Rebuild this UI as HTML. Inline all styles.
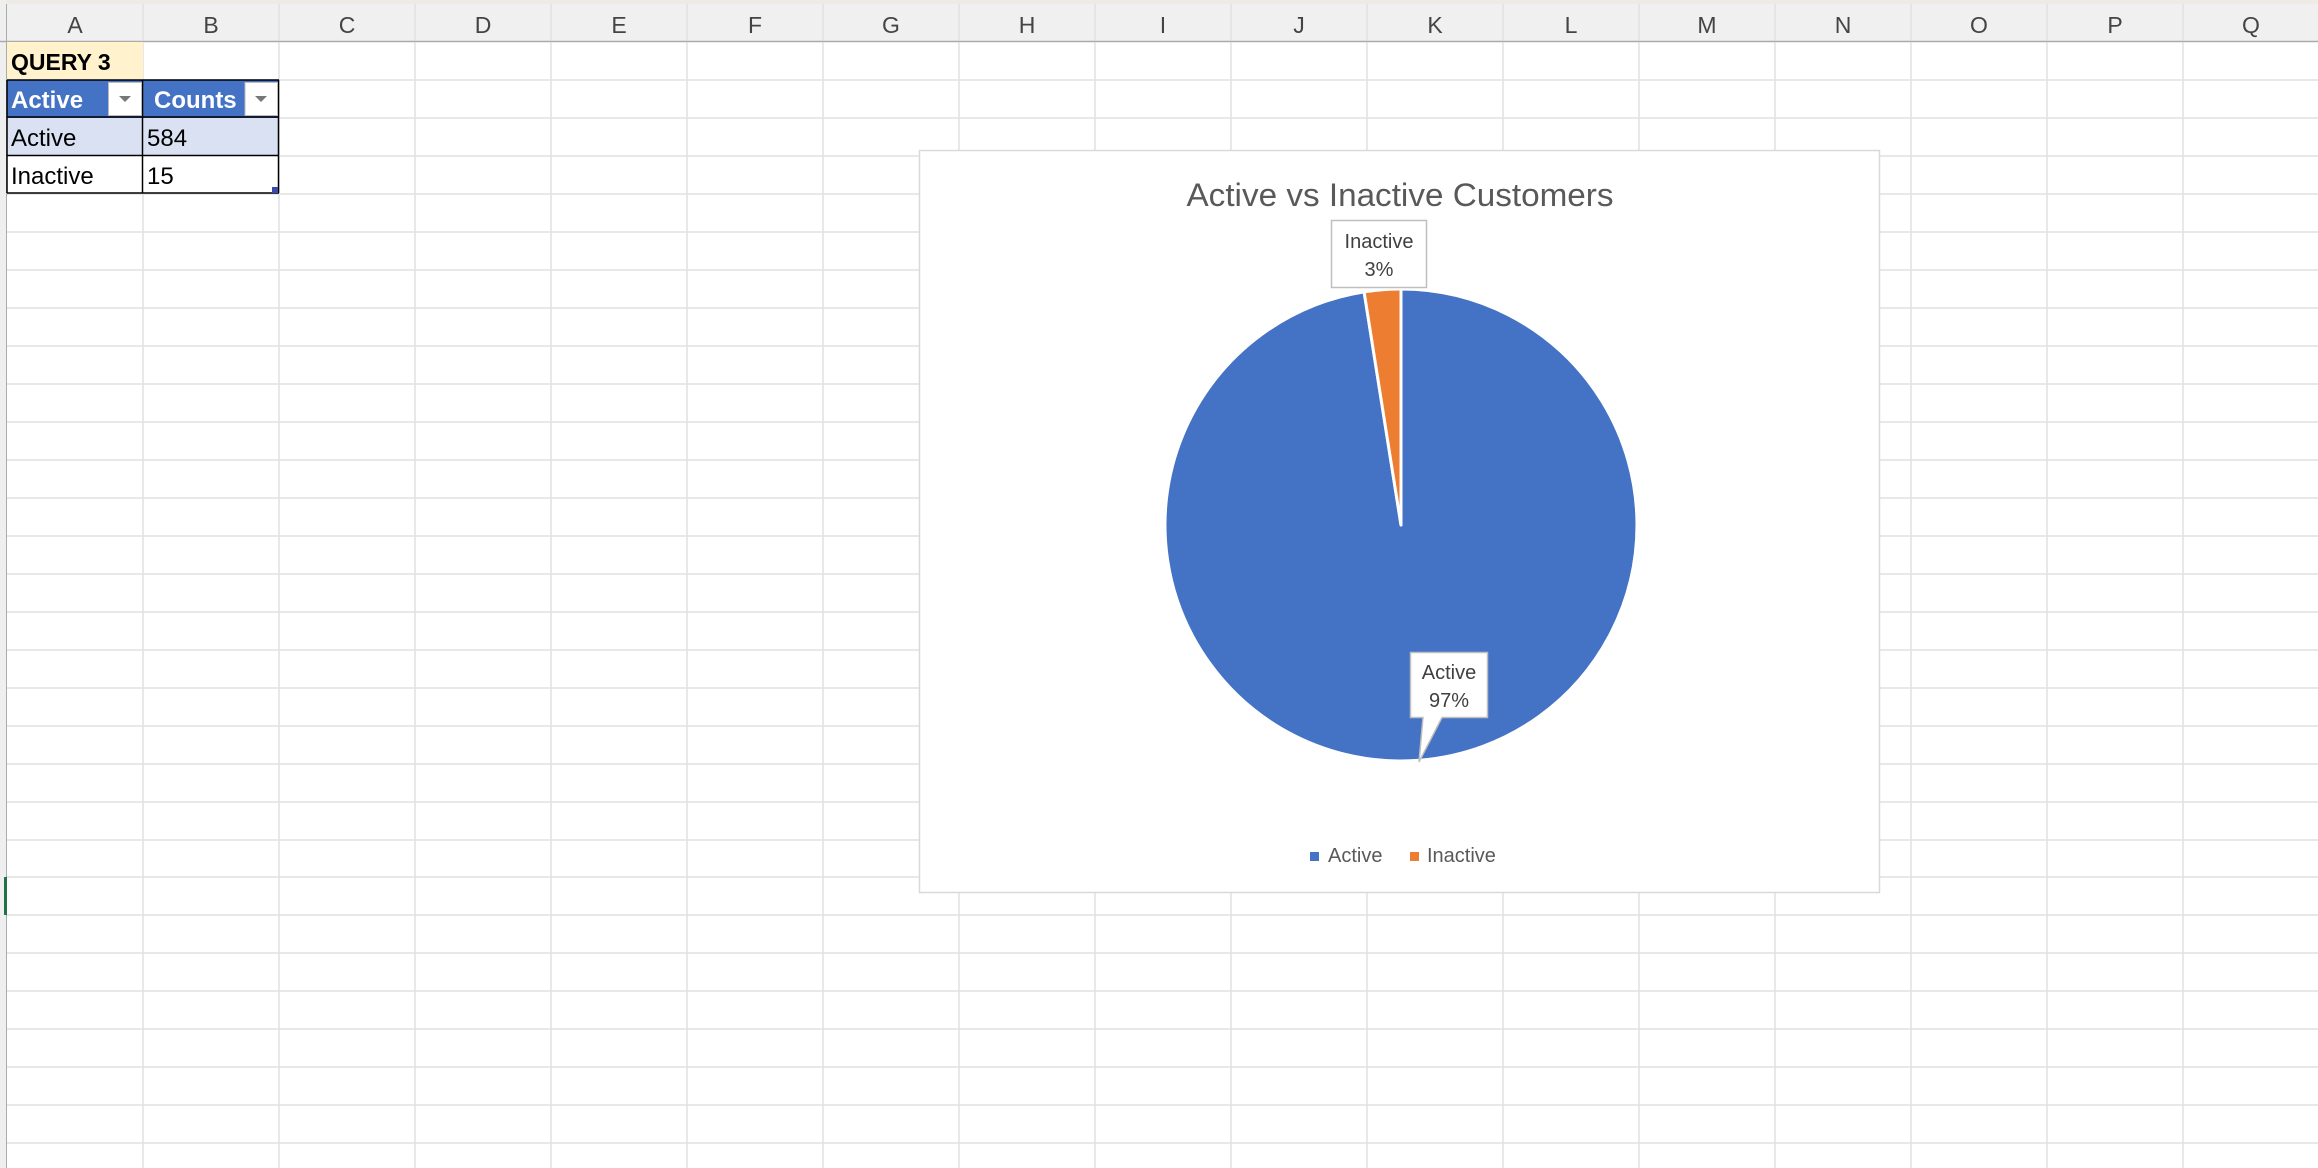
<!DOCTYPE html>
<html><head><meta charset="utf-8"><style>
html,body{margin:0;padding:0;background:#fff;width:2318px;height:1168px;overflow:hidden}
svg{display:block}
text{font-family:"Liberation Sans",sans-serif}
</style></head><body>
<svg width="2318" height="1168" viewBox="0 0 2318 1168" xmlns="http://www.w3.org/2000/svg">
<rect x="0" y="0" width="2318" height="1168" fill="#fff"/>
<rect x="0" y="0" width="2318" height="4" fill="#eeebe6"/>
<rect x="0" y="4" width="2318" height="38" fill="#f0f0f0"/>
<rect x="0" y="0" width="6" height="1168" fill="#efefef"/>
<line x1="6.5" y1="4" x2="6.5" y2="1168" stroke="#ababab" stroke-width="1"/>
<line x1="0" y1="41.5" x2="2318" y2="41.5" stroke="#ababab" stroke-width="1.5"/>
<g stroke="#dadada" stroke-width="1">
<line x1="143" y1="4" x2="143" y2="41"/><line x1="279" y1="4" x2="279" y2="41"/><line x1="415" y1="4" x2="415" y2="41"/><line x1="551" y1="4" x2="551" y2="41"/><line x1="687" y1="4" x2="687" y2="41"/><line x1="823" y1="4" x2="823" y2="41"/><line x1="959" y1="4" x2="959" y2="41"/><line x1="1095" y1="4" x2="1095" y2="41"/><line x1="1231" y1="4" x2="1231" y2="41"/><line x1="1367" y1="4" x2="1367" y2="41"/><line x1="1503" y1="4" x2="1503" y2="41"/><line x1="1639" y1="4" x2="1639" y2="41"/><line x1="1775" y1="4" x2="1775" y2="41"/><line x1="1911" y1="4" x2="1911" y2="41"/><line x1="2047" y1="4" x2="2047" y2="41"/><line x1="2183" y1="4" x2="2183" y2="41"/>
</g>
<g fill="#444" font-size="23" text-anchor="middle">
<text x="75" y="33">A</text><text x="211" y="33">B</text><text x="347" y="33">C</text><text x="483" y="33">D</text><text x="619" y="33">E</text><text x="755" y="33">F</text><text x="891" y="33">G</text><text x="1027" y="33">H</text><text x="1163" y="33">I</text><text x="1299" y="33">J</text><text x="1435" y="33">K</text><text x="1571" y="33">L</text><text x="1707" y="33">M</text><text x="1843" y="33">N</text><text x="1979" y="33">O</text><text x="2115" y="33">P</text><text x="2251" y="33">Q</text>
</g>
<g stroke="#e1e1e1" stroke-width="1.5">
<line x1="143" y1="42" x2="143" y2="1168"/><line x1="279" y1="42" x2="279" y2="1168"/><line x1="415" y1="42" x2="415" y2="1168"/><line x1="551" y1="42" x2="551" y2="1168"/><line x1="687" y1="42" x2="687" y2="1168"/><line x1="823" y1="42" x2="823" y2="1168"/><line x1="959" y1="42" x2="959" y2="1168"/><line x1="1095" y1="42" x2="1095" y2="1168"/><line x1="1231" y1="42" x2="1231" y2="1168"/><line x1="1367" y1="42" x2="1367" y2="1168"/><line x1="1503" y1="42" x2="1503" y2="1168"/><line x1="1639" y1="42" x2="1639" y2="1168"/><line x1="1775" y1="42" x2="1775" y2="1168"/><line x1="1911" y1="42" x2="1911" y2="1168"/><line x1="2047" y1="42" x2="2047" y2="1168"/><line x1="2183" y1="42" x2="2183" y2="1168"/>
<line x1="7" y1="80" x2="2318" y2="80"/><line x1="7" y1="118" x2="2318" y2="118"/><line x1="7" y1="156" x2="2318" y2="156"/><line x1="7" y1="194" x2="2318" y2="194"/><line x1="7" y1="232" x2="2318" y2="232"/><line x1="7" y1="270" x2="2318" y2="270"/><line x1="7" y1="308" x2="2318" y2="308"/><line x1="7" y1="346" x2="2318" y2="346"/><line x1="7" y1="384" x2="2318" y2="384"/><line x1="7" y1="422" x2="2318" y2="422"/><line x1="7" y1="460" x2="2318" y2="460"/><line x1="7" y1="498" x2="2318" y2="498"/><line x1="7" y1="536" x2="2318" y2="536"/><line x1="7" y1="574" x2="2318" y2="574"/><line x1="7" y1="612" x2="2318" y2="612"/><line x1="7" y1="650" x2="2318" y2="650"/><line x1="7" y1="688" x2="2318" y2="688"/><line x1="7" y1="726" x2="2318" y2="726"/><line x1="7" y1="764" x2="2318" y2="764"/><line x1="7" y1="802" x2="2318" y2="802"/><line x1="7" y1="840" x2="2318" y2="840"/><line x1="7" y1="877" x2="2318" y2="877"/><line x1="7" y1="915" x2="2318" y2="915"/><line x1="7" y1="953" x2="2318" y2="953"/><line x1="7" y1="991" x2="2318" y2="991"/><line x1="7" y1="1029" x2="2318" y2="1029"/><line x1="7" y1="1067" x2="2318" y2="1067"/><line x1="7" y1="1105" x2="2318" y2="1105"/><line x1="7" y1="1143" x2="2318" y2="1143"/>
</g>
<rect x="4" y="877" width="3" height="38" fill="#217346"/>
<rect x="7" y="42" width="136" height="37" fill="#fff2cc"/>
<text x="11" y="70" font-size="23" font-weight="bold" fill="#000">QUERY 3</text>
<rect x="7" y="80" width="272" height="38" fill="#4472c4"/>
<rect x="7" y="118" width="272" height="38" fill="#d9e1f2"/>
<rect x="7" y="156" width="272" height="37" fill="#fff"/>
<g stroke="#000" stroke-width="1.5" fill="none">
<line x1="7" y1="80" x2="279" y2="80"/><line x1="7" y1="117" x2="279" y2="117"/><line x1="7" y1="155.5" x2="279" y2="155.5"/><line x1="7" y1="193" x2="279" y2="193"/>
<line x1="7" y1="80" x2="7" y2="193"/><line x1="142.5" y1="80" x2="142.5" y2="193"/><line x1="278.5" y1="80" x2="278.5" y2="193"/>
</g>
<rect x="108.5" y="82.5" width="33" height="33" fill="#fff" stroke="#bbb"/>
<path d="M119 96 L131 96 L125 102 Z" fill="#777"/>
<rect x="245" y="82.5" width="32.5" height="33" fill="#fff" stroke="#bbb"/>
<path d="M255 96 L267 96 L261 102 Z" fill="#777"/>
<text x="11" y="108" font-size="24" font-weight="bold" fill="#fff">Active</text>
<text x="154" y="108" font-size="24" font-weight="bold" fill="#fff">Counts</text>
<text x="11" y="146" font-size="24" fill="#000">Active</text>
<text x="147" y="146" font-size="24" fill="#000">584</text>
<text x="11" y="184" font-size="24" fill="#000">Inactive</text>
<text x="147" y="184" font-size="24" fill="#000">15</text>
<rect x="272" y="187" width="6" height="6" fill="#3a4aa8"/>
<rect x="919.5" y="150.5" width="960" height="742" fill="#fff" stroke="#d9d9d9" stroke-width="1.5"/>
<text x="1400" y="206" font-size="32" fill="#595959" text-anchor="middle" textLength="427" lengthAdjust="spacingAndGlyphs">Active vs Inactive Customers</text>
<path d="M1401 525 L1401 289 A236 236 0 1 1 1364.1 291.9 Z" fill="#4472c4" stroke="#fff" stroke-width="3" stroke-linejoin="round"/>
<path d="M1401 525 L1364.1 291.9 A236 236 0 0 1 1401 289 Z" fill="#ed7d31" stroke="#fff" stroke-width="3" stroke-linejoin="round"/>
<rect x="1331.5" y="220.5" width="95" height="67" fill="#fff" stroke="#bfbfbf" stroke-width="1.5"/>
<text x="1379" y="248" font-size="20" fill="#404040" text-anchor="middle">Inactive</text>
<text x="1379" y="276" font-size="20" fill="#404040" text-anchor="middle">3%</text>
<path d="M1410.5 652.5 L1487.5 652.5 L1487.5 717.5 L1442 717.5 L1419 762 L1423 717.5 L1410.5 717.5 Z" fill="#fff" stroke="#bfbfbf" stroke-width="1.5"/>
<text x="1449" y="679" font-size="20" fill="#404040" text-anchor="middle">Active</text>
<text x="1449" y="707" font-size="20" fill="#404040" text-anchor="middle">97%</text>
<rect x="1310" y="852" width="9" height="9" fill="#4472c4"/>
<text x="1328" y="862" font-size="20" fill="#595959">Active</text>
<rect x="1410" y="852" width="9" height="9" fill="#ed7d31"/>
<text x="1427" y="862" font-size="20" fill="#595959">Inactive</text>
</svg>
</body></html>
